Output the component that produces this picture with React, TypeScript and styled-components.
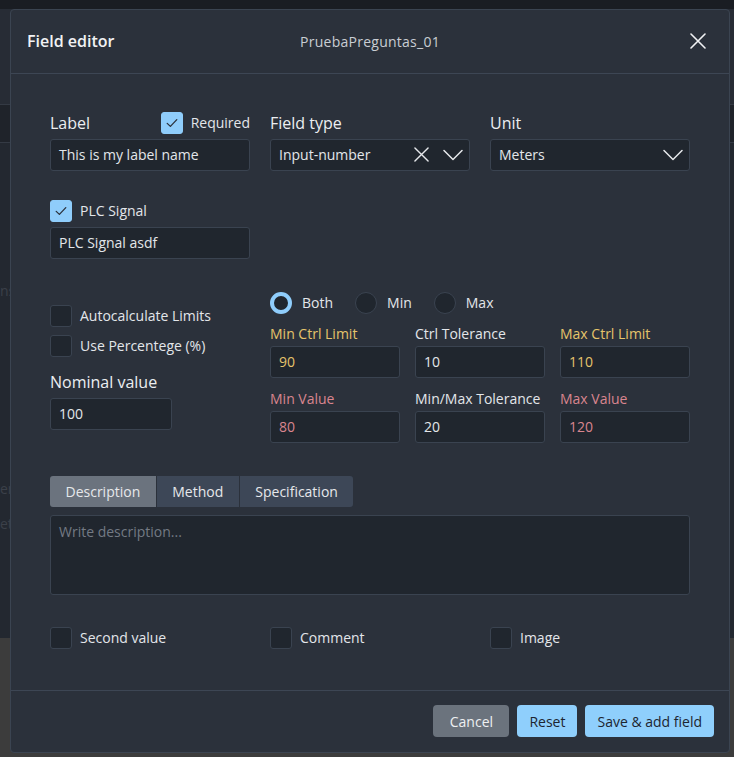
import React from "react";
import styled, { createGlobalStyle } from "styled-components";

const Global = createGlobalStyle`
  html, body { margin: 0; padding: 0; }
  body {
    width: 734px;
    height: 757px;
    overflow: hidden;
    background: #232830;
    font-family: "Open Sans", "Noto Sans", sans-serif;
  }
  * { box-sizing: border-box; }
`;

const Page = styled.div`
  position: relative;
  width: 734px;
  height: 757px;
  display: flex;
  flex-direction: column;
  background: #232830;
`;

const BgTop = styled.div`
  height: 9px;
  background: #1a1d23;
`;

const BgBand = styled.div<{ $h: number; $bg: string }>`
  height: ${(p) => p.$h}px;
  background: ${(p) => p.$bg};
  border-bottom: 1px solid #343a44;
`;

const BgBody = styled.div`
  flex: 1;
  display: flex;
  flex-direction: column;
  padding-top: 138px;
  color: #3b4049;
  font-size: 14px;
  line-height: 20px;
`;

const BgText = styled.div<{ $mt?: number }>`
  margin-top: ${(p) => p.$mt ?? 0}px;
`;

const BgGray = styled.div`
  height: 119px;
  background: #3c3c3c;
`;

const Modal = styled.div`
  position: absolute;
  top: 9px;
  left: 10px;
  width: 720px;
  height: 744px;
  background: #2b313b;
  border: 1px solid #3b4451;
  border-radius: 4px;
  display: flex;
  flex-direction: column;
`;

const Header = styled.div`
  height: 64px;
  border-bottom: 1px solid #3d4654;
  display: grid;
  grid-template-columns: 1fr auto 1fr;
  align-items: center;
  padding: 0 16px;
`;

const Title = styled.div`
  font-size: 16px;
  font-weight: 600;
  color: #f1f2f4;
`;

const SubTitle = styled.div`
  font-size: 14px;
  color: #c9cdd3;
  letter-spacing: 0.25px;
`;

const CloseBtn = styled.button`
  justify-self: end;
  margin-right: 7px;
  background: none;
  border: none;
  padding: 0;
  width: 16px;
  height: 16px;
  display: flex;
  align-items: center;
  justify-content: center;
  cursor: pointer;
`;

const Body = styled.div`
  flex: 1;
  padding: 37px 39px 40px 39px;
  display: flex;
  flex-direction: column;
`;

const Row3 = styled.div<{ $mt?: number }>`
  display: grid;
  grid-template-columns: 200px 200px 200px;
  column-gap: 20px;
  margin-top: ${(p) => p.$mt ?? 0}px;
`;

const Field = styled.div`
  display: flex;
  flex-direction: column;
  gap: 4px;
`;

const LabelRow = styled.div`
  height: 24px;
  display: flex;
  align-items: center;
  justify-content: space-between;
`;

const BigLabel = styled.span`
  font-size: 16px;
  color: #eceef1;
`;

const Input = styled.div<{ $color?: string; $w?: number }>`
  height: 32px;
  width: ${(p) => (p.$w ? `${p.$w}px` : "100%")};
  background: #20262e;
  border: 1px solid #3a4350;
  border-radius: 3px;
  padding: 0 8px;
  display: flex;
  align-items: center;
  font-size: 14px;
  color: ${(p) => p.$color ?? "#e3e6ea"};
`;

const SelectText = styled.span`
  flex: 1;
`;

const SelectIcons = styled.span`
  display: flex;
  align-items: center;
  gap: 14px;
  margin-right: -2px;
`;

const CheckItem = styled.label`
  display: flex;
  align-items: center;
  gap: 8px;
  font-size: 14px;
  color: #e3e6ea;
  height: 24px;
`;

const Box = styled.span<{ $checked?: boolean }>`
  width: 22px;
  height: 22px;
  border-radius: 3px;
  display: flex;
  align-items: center;
  justify-content: center;
  background: ${(p) => (p.$checked ? "#8fcdfb" : "#20262e")};
  border: 1px solid ${(p) => (p.$checked ? "#8fcdfb" : "#3a4350")};
`;

const LimitsSection = styled.div`
  display: grid;
  grid-template-columns: 200px 420px;
  column-gap: 20px;
  margin-top: 33px;
`;

const LeftCol = styled.div`
  display: flex;
  flex-direction: column;
  padding-top: 12px;
`;

const CheckStack = styled.div`
  display: flex;
  flex-direction: column;
  gap: 6px;
`;

const NominalField = styled(Field)`
  margin-top: 12px;
`;

const RightCol = styled.div`
  display: flex;
  flex-direction: column;
`;

const RadioRow = styled.div`
  display: flex;
  align-items: center;
  gap: 22px;
  height: 22px;
`;

const RadioItem = styled.label`
  display: flex;
  align-items: center;
  gap: 10px;
  font-size: 14px;
  color: #e3e6ea;
`;

const RadioCircle = styled.span<{ $checked?: boolean }>`
  width: 22px;
  height: 22px;
  border-radius: 50%;
  background: #20262e;
  border: ${(p) => (p.$checked ? "4px solid #8fcdfb" : "1px solid #3a4350")};
`;

const LimitGrid = styled.div`
  display: grid;
  grid-template-columns: 130px 130px 130px;
  column-gap: 15px;
  row-gap: 11px;
  margin-top: 10px;
`;

const SmallField = styled.div`
  display: flex;
  flex-direction: column;
  gap: 2px;
`;

const SmallLabel = styled.span<{ $color?: string }>`
  font-size: 14px;
  line-height: 20px;
  color: ${(p) => p.$color ?? "#e3e6ea"};
`;

const Tabs = styled.div`
  display: flex;
  gap: 1px;
  margin-top: 33px;
`;

const Tab = styled.button<{ $active?: boolean; $pos?: "first" | "last" | "mid" }>`
  height: 31px;
  padding: 0 15.5px;
  border: none;
  font-family: inherit;
  font-size: 14px;
  color: #e6e8eb;
  background: ${(p) => (p.$active ? "#6b737e" : "#3d4757")};
  border-radius: ${(p) =>
    p.$pos === "first" ? "3px 0 0 3px" : p.$pos === "last" ? "0 3px 3px 0" : "0"};
`;

const TextArea = styled.div`
  margin-top: 8px;
  height: 80px;
  background: #20262e;
  border: 1px solid #3a4350;
  border-radius: 3px;
  padding: 6px 8px;
  font-size: 14px;
  color: #737a84;
`;

const BottomChecks = styled(Row3)`
  margin-top: 31px;
`;

const Footer = styled.div`
  height: 63px;
  border-top: 1px solid #3d4654;
  display: flex;
  justify-content: flex-end;
  align-items: center;
  gap: 8px;
  padding: 0 15px 0 0;
`;

const Button = styled.button<{ $variant: "muted" | "primary" }>`
  height: 32px;
  padding: 0 12px;
  border: none;
  border-radius: 4px;
  font-family: inherit;
  font-size: 14px;
  cursor: pointer;
  background: ${(p) => (p.$variant === "muted" ? "#6b737d" : "#8fcffc")};
  color: ${(p) => (p.$variant === "muted" ? "#eef0f2" : "#1d2530")};
  min-width: ${(p) => (p.$variant === "muted" ? "76px" : "0")};
`;

const CheckIcon = () => (
  <svg width="14" height="14" viewBox="0 0 14 14" fill="none">
    <path d="M2.2 7.4 L5.4 10.4 L11.8 3.6" stroke="#2b313b" strokeWidth="1.3" strokeLinecap="round" strokeLinejoin="round" />
  </svg>
);

const XIcon = ({ size = 16, color = "#e6e8eb", w = 1.6 }: { size?: number; color?: string; w?: number }) => (
  <svg width={size} height={size} viewBox="0 0 16 16" fill="none">
    <path d="M1 1 L15 15 M15 1 L1 15" stroke={color} strokeWidth={w} strokeLinecap="round" />
  </svg>
);

const Chevron = () => (
  <svg width="20" height="12" viewBox="0 0 20 12" fill="none">
    <path d="M1 1.5 L10 10.5 L19 1.5" stroke="#e6e8eb" strokeWidth="1.5" strokeLinecap="round" strokeLinejoin="round" />
  </svg>
);

const Check = ({ label, checked }: { label: string; checked?: boolean }) => (
  <CheckItem>
    <Box $checked={checked}>{checked && <CheckIcon />}</Box>
    {label}
  </CheckItem>
);

const YEL = "#e5c46b";
const PINK = "#d9858f";

export default function App() {
  return (
    <>
      <Global />
      <Page>
        <BgTop />
        <BgBand $h={96} $bg="#272c35" />
        <BgBand $h={38} $bg="#1f232a" />
        <BgBody>
          <BgText>ns</BgText>
          <BgText $mt={178}>er</BgText>
          <BgText $mt={15}>etl</BgText>
        </BgBody>
        <BgGray />
        <Modal>
          <Header>
            <Title>Field editor</Title>
            <SubTitle>PruebaPreguntas_01</SubTitle>
            <CloseBtn aria-label="close">
              <XIcon size={16} color="#f1f2f4" w={1.6} />
            </CloseBtn>
          </Header>
          <Body>
            <Row3>
              <Field>
                <LabelRow>
                  <BigLabel>Label</BigLabel>
                  <Check label="Required" checked />
                </LabelRow>
                <Input>This is my label name</Input>
              </Field>
              <Field>
                <LabelRow>
                  <BigLabel>Field type</BigLabel>
                </LabelRow>
                <Input>
                  <SelectText>Input-number</SelectText>
                  <SelectIcons>
                    <XIcon size={15} w={1.5} />
                    <Chevron />
                  </SelectIcons>
                </Input>
              </Field>
              <Field>
                <LabelRow>
                  <BigLabel>Unit</BigLabel>
                </LabelRow>
                <Input>
                  <SelectText>Meters</SelectText>
                  <SelectIcons>
                    <Chevron />
                  </SelectIcons>
                </Input>
              </Field>
            </Row3>
            <Row3 $mt={28}>
              <Field>
                <LabelRow>
                  <Check label="PLC Signal" checked />
                </LabelRow>
                <Input>PLC Signal asdf</Input>
              </Field>
            </Row3>
            <LimitsSection>
              <LeftCol>
                <CheckStack>
                  <Check label="Autocalculate Limits" />
                  <Check label="Use Percentege (%)" />
                </CheckStack>
                <NominalField>
                  <LabelRow>
                    <BigLabel>Nominal value</BigLabel>
                  </LabelRow>
                  <Input $w={122}>100</Input>
                </NominalField>
              </LeftCol>
              <RightCol>
                <RadioRow>
                  <RadioItem>
                    <RadioCircle $checked />
                    Both
                  </RadioItem>
                  <RadioItem>
                    <RadioCircle />
                    Min
                  </RadioItem>
                  <RadioItem>
                    <RadioCircle />
                    Max
                  </RadioItem>
                </RadioRow>
                <LimitGrid>
                  <SmallField>
                    <SmallLabel $color={YEL}>Min Ctrl Limit</SmallLabel>
                    <Input $color={YEL}>90</Input>
                  </SmallField>
                  <SmallField>
                    <SmallLabel>Ctrl Tolerance</SmallLabel>
                    <Input>10</Input>
                  </SmallField>
                  <SmallField>
                    <SmallLabel $color={YEL}>Max Ctrl Limit</SmallLabel>
                    <Input $color={YEL}>110</Input>
                  </SmallField>
                  <SmallField>
                    <SmallLabel $color={PINK}>Min Value</SmallLabel>
                    <Input $color={PINK}>80</Input>
                  </SmallField>
                  <SmallField>
                    <SmallLabel>Min/Max Tolerance</SmallLabel>
                    <Input>20</Input>
                  </SmallField>
                  <SmallField>
                    <SmallLabel $color={PINK}>Max Value</SmallLabel>
                    <Input $color={PINK}>120</Input>
                  </SmallField>
                </LimitGrid>
              </RightCol>
            </LimitsSection>
            <Tabs>
              <Tab $active $pos="first">Description</Tab>
              <Tab $pos="mid">Method</Tab>
              <Tab $pos="last">Specification</Tab>
            </Tabs>
            <TextArea>Write description...</TextArea>
            <BottomChecks>
              <Check label="Second value" />
              <Check label="Comment" />
              <Check label="Image" />
            </BottomChecks>
          </Body>
          <Footer>
            <Button $variant="muted">Cancel</Button>
            <Button $variant="primary">Reset</Button>
            <Button $variant="primary">Save &amp; add field</Button>
          </Footer>
        </Modal>
      </Page>
    </>
  );
}
